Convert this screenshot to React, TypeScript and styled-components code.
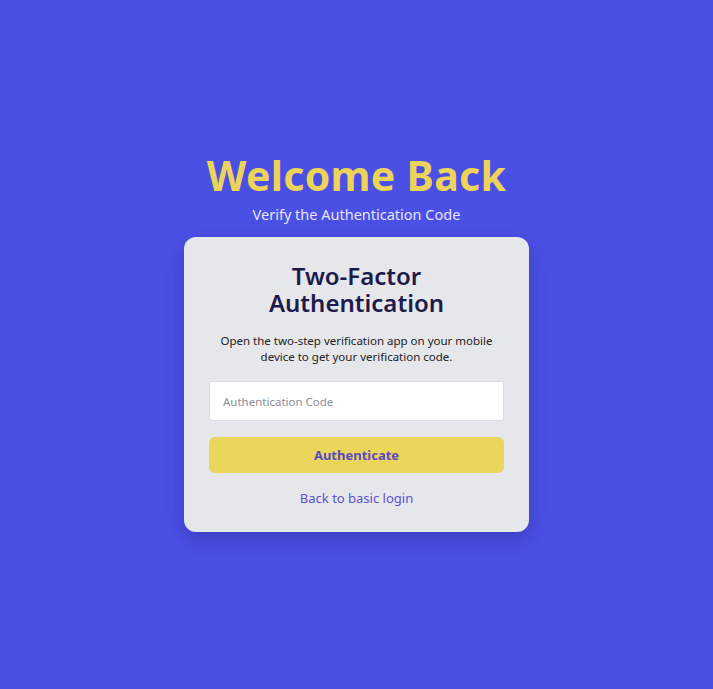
import React from "react";
import styled, { createGlobalStyle } from "styled-components";

const Global = createGlobalStyle`
  html, body { margin: 0; padding: 0; }
  body { background: #4b50e5; font-family: "Noto Sans", "Open Sans", sans-serif; }
  * { box-sizing: border-box; }
`;

const Page = styled.main`
  min-height: 100vh;
  display: flex;
  flex-direction: column;
  align-items: center;
  justify-content: center;
  padding-bottom: 6px;
`;

const Heading = styled.h1`
  margin: 0;
  color: #ecd45a;
  font-size: 41px;
  font-weight: 700;
  line-height: 48px;
  letter-spacing: 0.3px;
`;

const Sub = styled.p`
  margin: 5px 0 13px;
  color: #e4e4f7;
  font-size: 14.5px;
  line-height: 20px;
`;

const Card = styled.section`
  width: 345px;
  background: #e5e7eb;
  border-radius: 12px;
  padding: 25px 25px 25px;
  display: flex;
  flex-direction: column;
  align-items: stretch;
  box-shadow: 0 8px 20px rgba(30, 30, 120, 0.35);
`;

const CardTitle = styled.h2`
  margin: 0;
  text-align: center;
  color: #1e1b4b;
  font-size: 24px;
  font-weight: 600;
  line-height: 27px;
  padding: 0 30px;
`;

const Desc = styled.p`
  margin: 17px 0 16px;
  text-align: center;
  color: #222;
  font-size: 11.5px;
  line-height: 16px;
`;

const Input = styled.input`
  height: 40px;
  border: 1px solid #dcdde2;
  border-radius: 3px;
  background: #fff;
  padding: 0 13px;
  font-family: inherit;
  font-size: 11.5px;
  color: #333;
  outline: none;
  &::placeholder { color: #8e8e96; }
`;

const Button = styled.button`
  margin-top: 16px;
  height: 36px;
  border: none;
  border-radius: 6px;
  background: #ebd55a;
  color: #5b48c4;
  font-family: inherit;
  font-size: 13px;
  font-weight: 700;
  cursor: pointer;
`;

const BackLink = styled.a`
  margin-top: 16px;
  text-align: center;
  color: #5b52d4;
  font-size: 13px;
  line-height: 18px;
  text-decoration: none;
`;

export default function App() {
  return (
    <>
      <Global />
      <Page>
        <Heading>Welcome Back</Heading>
        <Sub>Verify the Authentication Code</Sub>
        <Card>
          <CardTitle>Two-Factor Authentication</CardTitle>
          <Desc>
            Open the two-step verification app on your mobile
            <br />
            device to get your verification code.
          </Desc>
          <Input placeholder="Authentication Code" />
          <Button>Authenticate</Button>
          <BackLink href="#">Back to basic login</BackLink>
        </Card>
      </Page>
    </>
  );
}
